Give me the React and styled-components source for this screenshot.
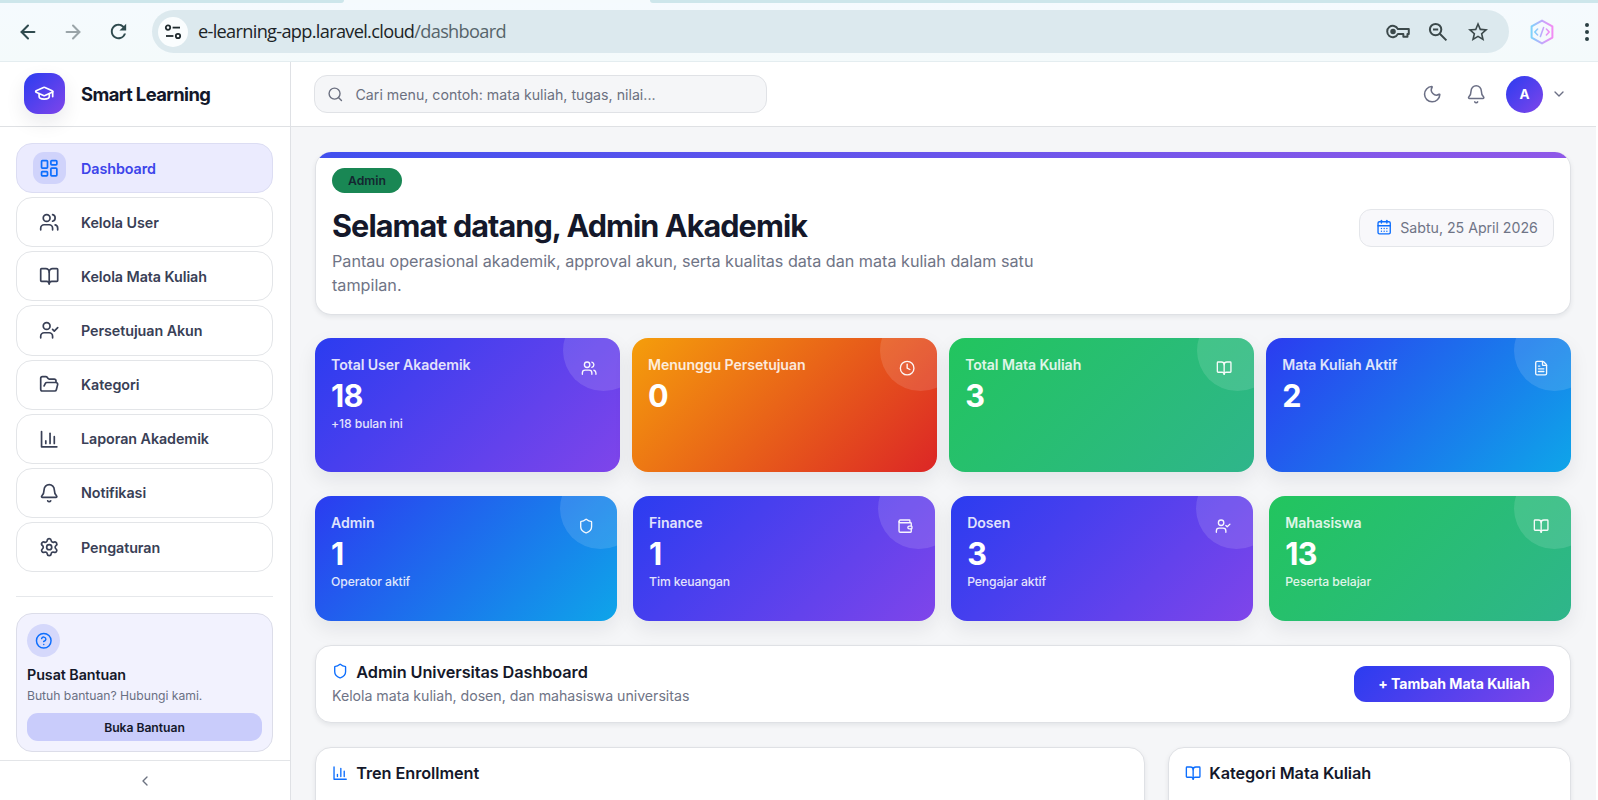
import styled, { createGlobalStyle } from "styled-components";
import {
  ArrowLeft,
  ArrowRight,
  Bell,
  BookOpen,
  CalendarDays,
  ChevronDown,
  ChevronLeft,
  CircleHelp,
  Clock,
  FileText,
  FolderOpen,
  GraduationCap,
  LayoutDashboard,
  Moon,
  Search,
  Settings,
  Shield,
  UserCheck,
  Users,
  Wallet,
} from "lucide-react";
import { MdOutlineStarBorder, MdRefresh } from "react-icons/md";

const gradients = {
  primary: "linear-gradient(135deg, #2b3cf0 0%, #7f45ea 100%)",
  warning: "linear-gradient(135deg, #f59e0b 0%, #dc2626 100%)",
  success: "linear-gradient(135deg, #22c55e 0%, #2fb58b 100%)",
  info: "linear-gradient(135deg, #2b3cf0 0%, #0ea5e9 100%)",
};

// Bar chart with square axis corner
const ChartIcon = ({ size = 20, strokeWidth = 2 }) => (
  <svg
    width={size}
    height={size}
    viewBox="0 0 24 24"
    fill="none"
    stroke="currentColor"
    strokeWidth={strokeWidth}
    strokeLinecap="round"
    strokeLinejoin="round"
  >
    <path d="M3 3v18h18" />
    <path d="M18 17V9" />
    <path d="M13 17V5" />
    <path d="M8 17v-3" />
  </svg>
);

const TuneIcon = () => (
  <svg
    width="18"
    height="18"
    viewBox="0 0 18 18"
    fill="none"
    stroke="#1f2a2e"
    strokeWidth="1.8"
  >
    <circle cx="4" cy="4.6" r="2.2" />
    <path d="M8.6 4.6H16" />
    <circle cx="14" cy="13" r="2.2" />
    <path d="M2 13h7.4" />
  </svg>
);

const KeyIcon = () => (
  <svg
    width="24"
    height="15"
    viewBox="0 0 25 16"
    fill="none"
    stroke="#3c494b"
    strokeWidth="2.1"
    strokeLinejoin="round"
  >
    <path d="M12.4 5.4H24v5.2h-1.4v3h-4.4v-3h-5.8A6 6 0 1 1 12.4 5.4Z" />
    <circle cx="7.2" cy="8" r="1.9" fill="#3c494b" />
  </svg>
);

const ZoomOutIcon = () => (
  <svg
    width="20"
    height="20"
    viewBox="0 0 20 20"
    fill="none"
    stroke="#3c494b"
    strokeWidth="2"
  >
    <circle cx="7.6" cy="7.6" r="5.7" />
    <path d="m11.8 11.8 6.6 6.6M5 7.6h5.2" />
  </svg>
);

const CodeHexIcon = () => (
  <svg width="26" height="28" viewBox="0 0 26 28" fill="none">
    <defs>
      <linearGradient id="hex" x1="0" y1="0" x2="1" y2="0">
        <stop offset="0" stopColor="#7fd3fb" />
        <stop offset="0.5" stopColor="#c0a8fb" />
        <stop offset="1" stopColor="#f28cf3" />
      </linearGradient>
    </defs>
    <g stroke="url(#hex)" strokeLinejoin="round" strokeLinecap="round">
      <path d="M13 2.6 23.4 8.4V19.6L13 25.4 2.6 19.6V8.4Z" strokeWidth="2" />
      <path
        d="M8.6 11 5.8 14l2.8 3M17.4 11l2.8 3-2.8 3M14.6 9.6l-3.2 8.8"
        strokeWidth="1.6"
      />
    </g>
  </svg>
);

const menu = [
  { label: "Dashboard", icon: LayoutDashboard, active: true },
  { label: "Kelola User", icon: Users },
  { label: "Kelola Mata Kuliah", icon: BookOpen },
  { label: "Persetujuan Akun", icon: UserCheck },
  { label: "Kategori", icon: FolderOpen },
  { label: "Laporan Akademik", icon: ChartIcon },
  { label: "Notifikasi", icon: Bell },
  { label: "Pengaturan", icon: Settings },
];

const resumen = [
  {
    title: "Total User Akademik",
    value: 18,
    note: "+18 bulan ini",
    icon: Users,
    color: "primary",
  },
  { title: "Menunggu Persetujuan", value: 0, icon: Clock, color: "warning" },
  { title: "Total Mata Kuliah", value: 3, icon: BookOpen, color: "success" },
  { title: "Mata Kuliah Aktif", value: 2, icon: FileText, color: "info" },
];

const roles = [
  {
    title: "Admin",
    value: 1,
    note: "Operator aktif",
    icon: Shield,
    color: "info",
  },
  {
    title: "Finance",
    value: 1,
    note: "Tim keuangan",
    icon: Wallet,
    color: "primary",
  },
  {
    title: "Dosen",
    value: 3,
    note: "Pengajar aktif",
    icon: UserCheck,
    color: "primary",
  },
  {
    title: "Mahasiswa",
    value: 13,
    note: "Peserta belajar",
    icon: BookOpen,
    color: "success",
  },
];

const StatCard = ({ title, value, note, icon: Icon, color }) => (
  <Stat $color={color}>
    <StatTitle>{title}</StatTitle>
    <StatValue>{value}</StatValue>
    {note ? <StatNote>{note}</StatNote> : null}
    <StatBubble />
    <StatIcon>
      <Icon size={16.3} strokeWidth={2} />
    </StatIcon>
  </Stat>
);

export default function App() {
  return (
    <>
      <GlobalStyle />
      <Window>
        <TabStrip>
          <TabEdge $side="left" />
          <ActiveTab />
          <TabEdge $side="right" />
        </TabStrip>
        <Toolbar>
          <NavButtons>
            <ArrowLeft size={22} color="#2f4a4e" strokeWidth={2.2} />
            <ArrowRight size={22} color="#9aa4a8" strokeWidth={2.2} />
            <MdRefresh size={23} color="#2f4a4e" />
          </NavButtons>
          <AddressBar>
            <SiteInfo>
              <TuneIcon />
            </SiteInfo>
            <Url>
              e-learning-app.laravel.cloud<span>/dashboard</span>
            </Url>
            <AddressActions>
              <KeyIcon />
              <ZoomOutIcon />
              <MdOutlineStarBorder size={24} />
            </AddressActions>
          </AddressBar>
          <ExtensionSlot>
            <CodeHexIcon />
          </ExtensionSlot>
          <Dots>
            <i />
            <i />
            <i />
          </Dots>
        </Toolbar>

        <Page>
          <Sidebar>
            <Brand>
              <BrandLogo>
                <GraduationCap size={20.4} strokeWidth={2} />
              </BrandLogo>
              Smart Learning
            </Brand>
            <Menu>
              {menu.map(({ label, icon: Icon, active }) => (
                <MenuItem key={label} $active={active}>
                  <MenuIcon $active={active}>
                    <Icon size={20.4} strokeWidth={2} />
                  </MenuIcon>
                  {label}
                </MenuItem>
              ))}
            </Menu>
            <Divider />
            <Help>
              <HelpIcon>
                <CircleHelp size={17.5} strokeWidth={2} />
              </HelpIcon>
              <HelpTitle>Pusat Bantuan</HelpTitle>
              <HelpText>Butuh bantuan? Hubungi kami.</HelpText>
              <HelpButton>Buka Bantuan</HelpButton>
            </Help>
            <Collapse>
              <ChevronLeft size={16} strokeWidth={2} />
            </Collapse>
          </Sidebar>

          <Content>
            <Header>
              <SearchBox>
                <Search size={16.5} strokeWidth={2} />
                Cari menu, contoh: mata kuliah, tugas, nilai...
              </SearchBox>
              <HeaderActions>
                <Moon size={20.4} strokeWidth={1.8} />
                <Bell size={20.4} strokeWidth={1.8} />
                <Profile>
                  <Avatar>A</Avatar>
                  <ChevronDown size={16} strokeWidth={2} />
                </Profile>
              </HeaderActions>
            </Header>

            <Main>
              <Welcome>
                <div>
                  <Badge>Admin</Badge>
                  <WelcomeTitle>Selamat datang, Admin Akademik</WelcomeTitle>
                  <WelcomeText>
                    Pantau operasional akademik, approval akun, serta kualitas
                    data dan mata kuliah dalam satu tampilan.
                  </WelcomeText>
                </div>
                <DatePill>
                  <CalendarDays size={16.3} strokeWidth={2} />
                  Sabtu, 25 April 2026
                </DatePill>
              </Welcome>

              <StatGrid $gap={12.3} $height={134}>
                {resumen.map((item) => (
                  <StatCard key={item.title} {...item} />
                ))}
              </StatGrid>
              <StatGrid $gap={16.3} $height={125}>
                {roles.map((item) => (
                  <StatCard key={item.title} {...item} />
                ))}
              </StatGrid>

              <ActionCard>
                <div>
                  <CardTitle>
                    <Shield size={16.3} strokeWidth={2} />
                    Admin Universitas Dashboard
                  </CardTitle>
                  <CardText>
                    Kelola mata kuliah, dosen, dan mahasiswa universitas
                  </CardText>
                </div>
                <AddButton>+ Tambah Mata Kuliah</AddButton>
              </ActionCard>

              <PanelGrid>
                <Panel>
                  <CardTitle>
                    <ChartIcon size={16.3} />
                    Tren Enrollment
                  </CardTitle>
                </Panel>
                <Panel>
                  <CardTitle>
                    <BookOpen size={16.3} strokeWidth={2} />
                    Kategori Mata Kuliah
                  </CardTitle>
                </Panel>
              </PanelGrid>
            </Main>
          </Content>
        </Page>
      </Window>
    </>
  );
}

const GlobalStyle = createGlobalStyle`
  * {
    box-sizing: border-box;
  }
  body {
    margin: 0;
    overflow: hidden;
    font-family: Inter, "Liberation Sans", sans-serif;
    color: #14182a;
  }
  svg {
    flex-shrink: 0;
  }
`;

const Window = styled.div`
  display: flex;
  flex-direction: column;
  height: 800px;
  overflow: hidden;
  background: #fff;
`;

const TabStrip = styled.div`
  display: flex;
  height: 3px;
  flex-shrink: 0;
  background: #f5fafd;
`;

const TabEdge = styled.div`
  background: #cde6eb;
  height: 2.5px;
  width: ${({ $side }) => ($side === "left" ? "344px" : "auto")};
  flex: ${({ $side }) => ($side === "left" ? "none" : "1")};
  border-radius: ${({ $side }) =>
    $side === "left" ? "0 0 4px 0" : "0 0 0 4px"};
`;

const ActiveTab = styled.div`
  width: 306px;
`;

const Toolbar = styled.div`
  display: flex;
  align-items: center;
  height: 59px;
  padding: 0 5px 1px 17px;
  flex-shrink: 0;
  background: linear-gradient(#f5fafe, #f4fafb);
  border-bottom: 1px solid #e4edf0;
`;

const NavButtons = styled.div`
  display: flex;
  align-items: center;
  gap: 23px;
  width: 135px;
`;

const AddressBar = styled.div`
  display: flex;
  align-items: center;
  flex: 1;
  height: 43px;
  padding: 0 19px 0 6px;
  border-radius: 22px;
  background: #dce9ee;
`;

const SiteInfo = styled.div`
  display: flex;
  align-items: center;
  justify-content: center;
  width: 30px;
  height: 30px;
  border-radius: 50%;
  background: #fafdfe;
`;

const Url = styled.div`
  margin: -2px 0 0 10px;
  font-family: "Open Sans", "Noto Sans", sans-serif;
  font-size: 18.2px;
  letter-spacing: -0.69px;
  color: #1b2326;
  span {
    color: #56646a;
  }
`;

const AddressActions = styled.div`
  display: flex;
  align-items: center;
  gap: 18px;
  margin-left: auto;
  color: #3c494b;
`;

const ExtensionSlot = styled.div`
  display: flex;
  width: 77px;
  padding-left: 20px;
`;

const Dots = styled.div`
  display: flex;
  flex-direction: column;
  gap: 3px;
  margin-left: -6px;
  width: 13px;
  align-items: center;
  i {
    width: 4px;
    height: 4px;
    border-radius: 50%;
    background: #2b3f43;
  }
`;

const Page = styled.div`
  display: flex;
  flex: 1;
  min-height: 0;
  padding-right: 2px;
`;

const Sidebar = styled.aside`
  display: flex;
  flex-direction: column;
  width: 291px;
  flex-shrink: 0;
  background: #fff;
  border-right: 1px solid #dfe1e5;
`;

const Brand = styled.div`
  display: flex;
  align-items: center;
  gap: 16px;
  height: 65px;
  padding: 0 0 1px 24px;
  border-bottom: 1px solid #dfe1e4;
  font-size: 18.4px;
  font-weight: 700;
  letter-spacing: -0.6px;
`;

const BrandLogo = styled.div`
  display: flex;
  align-items: center;
  justify-content: center;
  width: 41px;
  height: 41px;
  border-radius: 14px;
  background: ${gradients.primary};
  color: #fff;
  box-shadow: 0 8px 20px rgba(15, 23, 42, 0.09);
`;

const Menu = styled.nav`
  display: flex;
  flex-direction: column;
  gap: 4px;
  padding: 16px 17px 0 16px;
`;

const MenuItem = styled.div`
  display: flex;
  align-items: center;
  gap: 15px;
  height: 50.15px;
  padding-left: 16px;
  border: 1px solid ${({ $active }) => ($active ? "#dcddf3" : "#e3e5e8")};
  border-radius: 16px;
  background: ${({ $active }) => ($active ? "#ebebfe" : "#fff")};
  color: ${({ $active }) => ($active ? "#3c44ea" : "#394056")};
  font-size: 14.3px;
  font-weight: 600;
  letter-spacing: -0.06px;
`;

const MenuIcon = styled.span`
  display: flex;
  align-items: center;
  justify-content: center;
  width: 33px;
  height: 32px;
  border-radius: 11px;
  background: ${({ $active }) => ($active ? "#d0d3fb" : "transparent")};
  color: ${({ $active }) => ($active ? "#0d6efd" : "#394056")};
`;

const Divider = styled.div`
  height: 1px;
  margin: 24px 17px 16px 16px;
  background: #e6e8eb;
`;

const Help = styled.div`
  height: 139px;
  flex-shrink: 0;
  margin: 0 17px 0 16px;
  padding: 10px;
  border: 1px solid #dcdde9;
  border-radius: 16px;
  background: #f2f2fe;
`;

const HelpIcon = styled.div`
  display: flex;
  align-items: center;
  justify-content: center;
  width: 33px;
  height: 33px;
  border-radius: 50%;
  background: #d5d8fb;
  color: #0d6efd;
`;

const HelpTitle = styled.div`
  margin-top: 7px;
  font-size: 14.3px;
  font-weight: 600;
  line-height: 21px;
  letter-spacing: -0.06px;
`;

const HelpText = styled.div`
  margin-top: 1px;
  font-size: 12.2px;
  line-height: 19px;
  letter-spacing: -0.03px;
  color: #6a7083;
`;

const HelpButton = styled.div`
  margin-top: 8px;
  height: 28px;
  border-radius: 11px;
  background: #c9ccfb;
  font-size: 12.2px;
  font-weight: 600;
  letter-spacing: -0.05px;
  line-height: 29px;
  text-align: center;
`;

const Collapse = styled.div`
  display: flex;
  align-items: center;
  justify-content: center;
  flex: 1;
  margin-top: 8px;
  border-top: 1px solid #e3e5e8;
  color: #6b7280;
`;

const Content = styled.div`
  display: flex;
  flex-direction: column;
  flex: 1;
  min-width: 0;
  background: #f5f6f8;
`;

const Header = styled.header`
  display: flex;
  align-items: center;
  justify-content: space-between;
  height: 65px;
  flex-shrink: 0;
  padding: 0 29px 1px 23px;
  background: #fff;
  border-bottom: 1px solid #dfe1e4;
`;

const SearchBox = styled.div`
  display: flex;
  align-items: center;
  gap: 12px;
  width: 453px;
  height: 38px;
  padding: 1px 0 0 12px;
  border: 1px solid #e0e2e6;
  border-radius: 13px;
  background: #f5f6f8;
  color: #6b7080;
  font-size: 14.2px;
`;

const HeaderActions = styled.div`
  display: flex;
  align-items: center;
  gap: 23px;
  padding-top: 1px;
  color: #6b6f85;
`;

const Profile = styled.div`
  display: flex;
  align-items: center;
  gap: 8px;
  margin-left: -3px;
`;

const Avatar = styled.div`
  width: 37px;
  height: 37px;
  border-radius: 50%;
  background: ${gradients.primary};
  color: #fff;
  font-size: 13.5px;
  font-weight: 700;
  line-height: 37px;
  text-align: center;
`;

const Main = styled.main`
  display: flex;
  flex-direction: column;
  gap: 24px;
  padding: 25px 25px 0 24px;
`;

const Card = styled.section`
  border: 1px solid #dfe1e5;
  border-radius: 16px;
  background: #fff;
  box-shadow: 0 2px 5px rgba(15, 23, 42, 0.08);
`;

const Welcome = styled(Card)`
  display: flex;
  align-items: flex-start;
  justify-content: space-between;
  height: 163px;
  margin-bottom: -1px;
  padding: 16px 16px 0;
  border-top: none;
  overflow: hidden;
  background: linear-gradient(90deg, #4150ee, #8f58e8) top / 100% 6px no-repeat,
    #fff;
`;

const Badge = styled.span`
  display: block;
  width: 70px;
  height: 25px;
  border-radius: 13px;
  background: #198754;
  font-size: 12.2px;
  font-weight: 600;
  line-height: 25px;
  text-align: center;
  color: #142630;
`;

const WelcomeTitle = styled.h1`
  margin: 14px 0 0;
  font-size: 30.6px;
  font-weight: 700;
  line-height: 37px;
  letter-spacing: -0.94px;
`;

const WelcomeText = styled.p`
  width: 715px;
  margin: 5px 0 0;
  font-size: 16.2px;
  line-height: 24.3px;
  letter-spacing: -0.02px;
  color: #6f7486;
`;

const DatePill = styled.div`
  display: flex;
  align-items: center;
  gap: 8px;
  width: 195px;
  height: 38px;
  margin-top: 40.5px;
  padding: 0 0 1px 16px;
  border: 1px solid #e4e6ea;
  border-radius: 12px;
  background: #f8f8fb;
  color: #6f7486;
  font-size: 14.2px;
  letter-spacing: -0.03px;
  white-space: nowrap;
  svg {
    color: #0d6efd;
  }
`;

const StatGrid = styled.div`
  display: grid;
  grid-template-columns: repeat(4, 1fr);
  grid-auto-rows: ${({ $height }) => $height}px;
  gap: ${({ $gap }) => $gap}px;
`;

const Stat = styled.div`
  position: relative;
  overflow: hidden;
  padding: 16px;
  border-radius: 16px;
  background: ${({ $color }) => gradients[$color]};
  color: #fff;
  box-shadow: 0 8px 20px rgba(15, 23, 42, 0.08);
`;

const StatTitle = styled.div`
  font-size: 14.1px;
  font-weight: 600;
  line-height: 22px;
  letter-spacing: -0.06px;
  opacity: 0.85;
`;

const StatValue = styled.div`
  margin-top: 1px;
  font-size: 30.6px;
  font-weight: 700;
  line-height: 38px;
  letter-spacing: -0.6px;
`;

const StatNote = styled.div`
  margin-top: -1px;
  font-size: 12.2px;
  font-weight: 500;
  line-height: 19px;
  letter-spacing: -0.1px;
  opacity: 0.85;
`;

const StatBubble = styled.span`
  position: absolute;
  top: -28px;
  right: -24px;
  width: 81px;
  height: 81px;
  border-radius: 50%;
  background: rgba(255, 255, 255, 0.12);
`;

const StatIcon = styled.span`
  position: absolute;
  top: 22px;
  right: 22px;
  display: flex;
  opacity: 0.95;
`;

const ActionCard = styled(Card)`
  display: flex;
  align-items: center;
  justify-content: space-between;
  height: 78px;
  padding: 0 16px;
`;

const CardTitle = styled.h2`
  display: flex;
  align-items: center;
  gap: 8px;
  margin: 0;
  font-size: 16.3px;
  font-weight: 600;
  line-height: 24px;
  letter-spacing: -0.08px;
  svg {
    color: #0d6efd;
  }
`;

const CardText = styled.p`
  margin: 1px 0 2px;
  font-size: 14.2px;
  line-height: 22px;
  letter-spacing: -0.03px;
  color: #6f7486;
`;

const AddButton = styled.div`
  width: 200px;
  height: 36px;
  border-radius: 12px;
  background: ${gradients.primary};
  color: #fff;
  font-size: 14.1px;
  font-weight: 700;
  letter-spacing: -0.05px;
  line-height: 36px;
  text-align: center;
`;

const PanelGrid = styled.div`
  display: grid;
  grid-template-columns: 830px 1fr;
  gap: 23px;
`;

const Panel = styled(Card)`
  height: 300px;
  padding: 13px 16px;
`;
